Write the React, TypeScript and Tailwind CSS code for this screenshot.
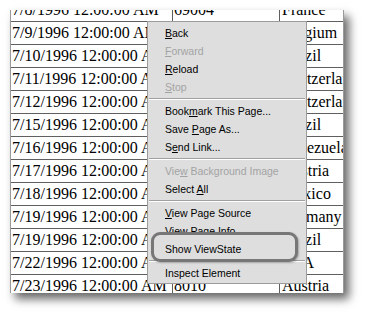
import type { ReactNode } from "react";

type Row = { date: string; code: string; country: string };

const rows: Row[] = [
  { date: "7/8/1996 12:00:00 AM", code: "69004", country: "France" },
  { date: "7/9/1996 12:00:00 AM", code: "B-6000", country: "Belgium" },
  { date: "7/10/1996 12:00:00 AM", code: "05454-876", country: "Brazil" },
  { date: "7/11/1996 12:00:00 AM", code: "3012", country: "Switzerland" },
  { date: "7/12/1996 12:00:00 AM", code: "1204", country: "Switzerland" },
  { date: "7/15/1996 12:00:00 AM", code: "08737-363", country: "Brazil" },
  { date: "7/16/1996 12:00:00 AM", code: "5022", country: "Venezuela" },
  { date: "7/17/1996 12:00:00 AM", code: "8010", country: "Austria" },
  { date: "7/18/1996 12:00:00 AM", code: "05022", country: "Mexico" },
  { date: "7/19/1996 12:00:00 AM", code: "50739", country: "Germany" },
  { date: "7/19/1996 12:00:00 AM", code: "02389-673", country: "Brazil" },
  { date: "7/22/1996 12:00:00 AM", code: "87110", country: "USA" },
  { date: "7/23/1996 12:00:00 AM", code: "8010", country: "Austria" },
];

function Item({ children, disabled, className }: { children: ReactNode; disabled?: boolean; className?: string }) {
  return (
    <div
      className={`h-[18px] leading-[18px] pl-[17px] whitespace-nowrap ${disabled ? "text-[#a3a3a3]" : "text-black"} ${className ?? ""}`}
    >
      {children}
    </div>
  );
}

function Separator() {
  return (
    <div className="h-[6px] flex items-center px-[1px]">
      <div className="w-full border-t border-b border-t-[#a0a0a0] border-b-white" />
    </div>
  );
}

const U = ({ children }: { children: ReactNode }) => <span className="underline underline-offset-[1px]">{children}</span>;

export default function App() {
  return (
    <div className="relative w-[365px] h-[314px] bg-white pt-[10px] pl-[10px] overflow-hidden">
      {/* grid of orders, clipped like a cut-out screenshot */}
      <div className="w-[334px] h-[283px] overflow-hidden bg-white border-l border-r border-[#9a9a9a] shadow-[5px_6px_9px_rgba(0,0,0,0.6)] font-['Liberation_Serif',serif] text-[16px] text-black">
        <div className="-mt-[11px]">
          {rows.map((r, i) => (
            <div key={i} className="flex h-[23px] leading-[22px] border-b border-[#5f5f5f] whitespace-nowrap">
              <div className="w-[162px] shrink-0 pl-[1px] border-r border-[#5f5f5f] overflow-hidden">{r.date}</div>
              <div className="w-[107px] shrink-0 pl-[1px] border-r border-[#5f5f5f] overflow-hidden">{r.code}</div>
              <div className="flex-1 pl-[2px] overflow-hidden">{r.country}</div>
            </div>
          ))}
        </div>
      </div>

      {/* context menu */}
      <div className="absolute left-[147px] top-[21px] w-[160px] bg-[#dedede] border border-[#9c9c9c] pt-[2px] pb-[1px] font-['Liberation_Sans',Arial,sans-serif] text-[10.5px]">
        <Item><U>B</U>ack</Item>
        <Item disabled><U>F</U>orward</Item>
        <Item><U>R</U>eload</Item>
        <Item disabled><U>S</U>top</Item>
        <Separator />
        <Item>Book<U>m</U>ark This Page...</Item>
        <Item>Save <U>P</U>age As...</Item>
        <Item>S<U>e</U>nd Link...</Item>
        <Separator />
        <Item disabled>Vie<U>w</U> Background Image</Item>
        <Item>Select <U>A</U>ll</Item>
        <Separator />
        <Item><U>V</U>iew Page Source</Item>
        <Item>View Page <U>I</U>nfo</Item>
        <Item className="relative z-20">Show ViewState</Item>
        <Separator />
        <Item>Inspect Element</Item>

        {/* annotation highlight */}
        <div className="absolute z-10 left-[3px] top-[210px] w-[147px] h-[30px] rounded-[9px] border-[3px] border-[#777777] bg-[#dedede] shadow-[1px_1px_2px_rgba(0,0,0,0.25)]" />
      </div>
    </div>
  );
}
